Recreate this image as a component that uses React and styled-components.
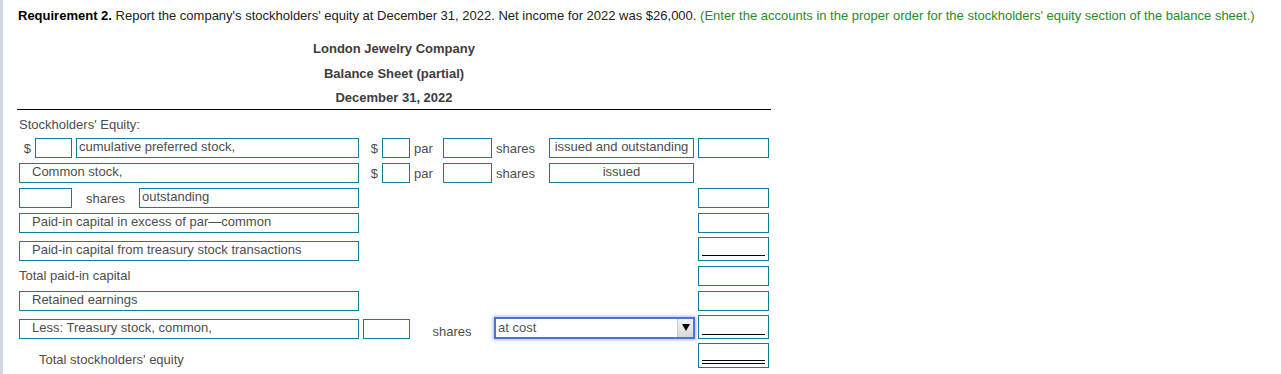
import React from "react";
import styled, { createGlobalStyle } from "styled-components";

const Global = createGlobalStyle`
  html, body { margin: 0; padding: 0; background: #fff; }
  body { font-family: "Liberation Sans", Arial, sans-serif; }
`;

const Page = styled.div`
  min-height: 374px;
  box-sizing: border-box;
  border-left: 3px solid #d3d7e2;
  padding-left: 14px;
`;

const Prompt = styled.p`
  margin: 0;
  padding-top: 8px;
  padding-left: 1px;
  font-size: 13px;
  line-height: 16px;
  color: #222;
  white-space: nowrap;
  b { color: #000; }
`;

const Hint = styled.span`
  color: #2a8a2a;
`;

const Sheet = styled.div`
  width: 754px;
`;

const Heading = styled.div`
  margin-top: 12px;
  border-bottom: 1px solid #000;
`;

const HeadingLine = styled.div`
  height: ${(p) => p.$h ?? 25}px;
  line-height: ${(p) => p.$h ?? 25}px;
  text-align: center;
  font-size: 13px;
  font-weight: bold;
  color: #3d3d3d;
`;

const Section = styled.div`
  display: flex;
  flex-direction: column;
  width: 752px;
  font-size: 13px;
  color: #4d4d4d;
`;

const Caption = styled.div`
  margin-top: 7px;
  padding-left: 2px;
  line-height: 16px;
`;

const Row = styled.div`
  display: flex;
  align-items: ${(p) => (p.$bottom ? "flex-end" : "center")};
  height: ${(p) => p.$h ?? 20}px;
  margin-top: ${(p) => p.$mt ?? 5}px;
  padding-left: ${(p) => p.$indent ?? 0}px;
`;

const Field = styled.div`
  box-sizing: border-box;
  flex: none;
  width: ${(p) => p.$w}px;
  height: 20px;
  margin-left: ${(p) => p.$ml ?? 0}px;
  border: 1px solid #137d97;
  background: #fff;
  padding-left: ${(p) => p.$pad ?? 2}px;
  line-height: 16px;
  text-align: ${(p) => (p.$center ? "center" : "left")};
  white-space: nowrap;
  overflow: hidden;
`;

const Amount = styled.div`
  box-sizing: border-box;
  flex: none;
  width: 71px;
  height: ${(p) => p.$h ?? 20}px;
  margin-left: auto;
  border: 1px solid #137d97;
  display: flex;
  align-items: flex-end;
  padding: 0 3px ${(p) => p.$pb ?? 4}px;
`;

const Underline = styled.div`
  flex: 1;
  height: ${(p) => (p.$double ? 2 : 0)}px;
  border-bottom: 1px solid #000;
  border-top: ${(p) => (p.$double ? "1px solid #000" : "none")};
`;

const Dollar = styled.div`
  flex: none;
  width: ${(p) => p.$w}px;
  box-sizing: border-box;
  padding-right: 4px;
  text-align: right;
`;

const Unit = styled.div`
  flex: none;
  width: ${(p) => p.$w}px;
  box-sizing: border-box;
  padding-left: ${(p) => (p.$center ? 0 : 4)}px;
  text-align: ${(p) => (p.$center ? "center" : "left")};
`;

const Label = styled.div`
  line-height: 16px;
`;

const Select = styled.div`
  box-sizing: border-box;
  flex: none;
  width: 201px;
  height: 22px;
  display: flex;
  align-items: stretch;
  border: 2px solid #4f72d4;
  box-shadow: 0 0 3px 1px rgba(90, 130, 230, 0.5);
  background: #fff;
  align-self: center;
  margin-top: 1px;
`;

const SelectValue = styled.div`
  flex: 1;
  padding-left: 2px;
  line-height: 18px;
  color: #555;
`;

const SelectButton = styled.div`
  flex: none;
  width: 15px;
  display: flex;
  align-items: center;
  justify-content: center;
  background: linear-gradient(#f4f4f4, #d8d8d8);
  border-left: 1px solid #c8c8c8;
  svg { display: block; }
`;

function PriceGroup({ issued }) {
  return (
    <>
      <Dollar $w={23}>$</Dollar>
      <Field $w={28} />
      <Unit $w={33}>par</Unit>
      <Field $w={49} />
      <Unit $w={57}>shares</Unit>
      <Field $w={145} $center $pad={0}>
        {issued}
      </Field>
    </>
  );
}

export default function App() {
  return (
    <>
      <Global />
      <Page>
        <Prompt>
          <b>Requirement 2.</b> Report the company's stockholders' equity at December 31, 2022. Net income for
          2022 was $26,000. <Hint>(Enter the accounts in the proper order for the stockholders' equity section of the balance sheet.)</Hint>
        </Prompt>
        <Sheet>
          <Heading>
            <HeadingLine>London Jewelry Company</HeadingLine>
            <HeadingLine>Balance Sheet (partial)</HeadingLine>
            <HeadingLine $h={23}>December 31, 2022</HeadingLine>
          </Heading>
          <Section>
            <Caption>Stockholders' Equity:</Caption>
            <Row $mt={5}>
              <Dollar $w={18}>$</Dollar>
              <Field $w={37} />
              <Field $w={283} $ml={4}>cumulative preferred stock,</Field>
              <PriceGroup issued="issued and outstanding" />
              <Amount />
            </Row>
            <Row $indent={2}>
              <Field $w={340} $pad={12}>Common stock,</Field>
              <PriceGroup issued="issued" />
            </Row>
            <Row $indent={2}>
              <Field $w={53} />
              <Unit $w={67} $center>shares</Unit>
              <Field $w={220}>outstanding</Field>
              <Amount />
            </Row>
            <Row $indent={2}>
              <Field $w={340} $pad={12}>Paid-in capital in excess of par—common</Field>
              <Amount />
            </Row>
            <Row $indent={2} $h={24} $mt={4} $bottom>
              <Field $w={340} $pad={12}>Paid-in capital from treasury stock transactions</Field>
              <Amount $h={24} $pb={4}>
                <Underline />
              </Amount>
            </Row>
            <Row $indent={2}>
              <Label>Total paid-in capital</Label>
              <Amount />
            </Row>
            <Row $indent={2}>
              <Field $w={340} $pad={12}>Retained earnings</Field>
              <Amount />
            </Row>
            <Row $indent={2} $h={24} $mt={4} $bottom>
              <Field $w={340} $pad={12}>Less: Treasury stock, common,</Field>
              <Field $w={47} $ml={4} />
              <Unit $w={84} $center>shares</Unit>
              <Select>
                <SelectValue>at cost</SelectValue>
                <SelectButton>
                  <svg width="8" height="7" viewBox="0 0 8 7">
                    <path d="M0 0H8L4 7Z" fill="#000" />
                  </svg>
                </SelectButton>
              </Select>
              <Amount $h={24} $pb={3}>
                <Underline />
              </Amount>
            </Row>
            <Row $indent={22} $h={25} $mt={4} $bottom>
              <Label>Total stockholders' equity</Label>
              <Amount $h={25} $pb={3}>
                <Underline $double />
              </Amount>
            </Row>
          </Section>
        </Sheet>
      </Page>
    </>
  );
}
